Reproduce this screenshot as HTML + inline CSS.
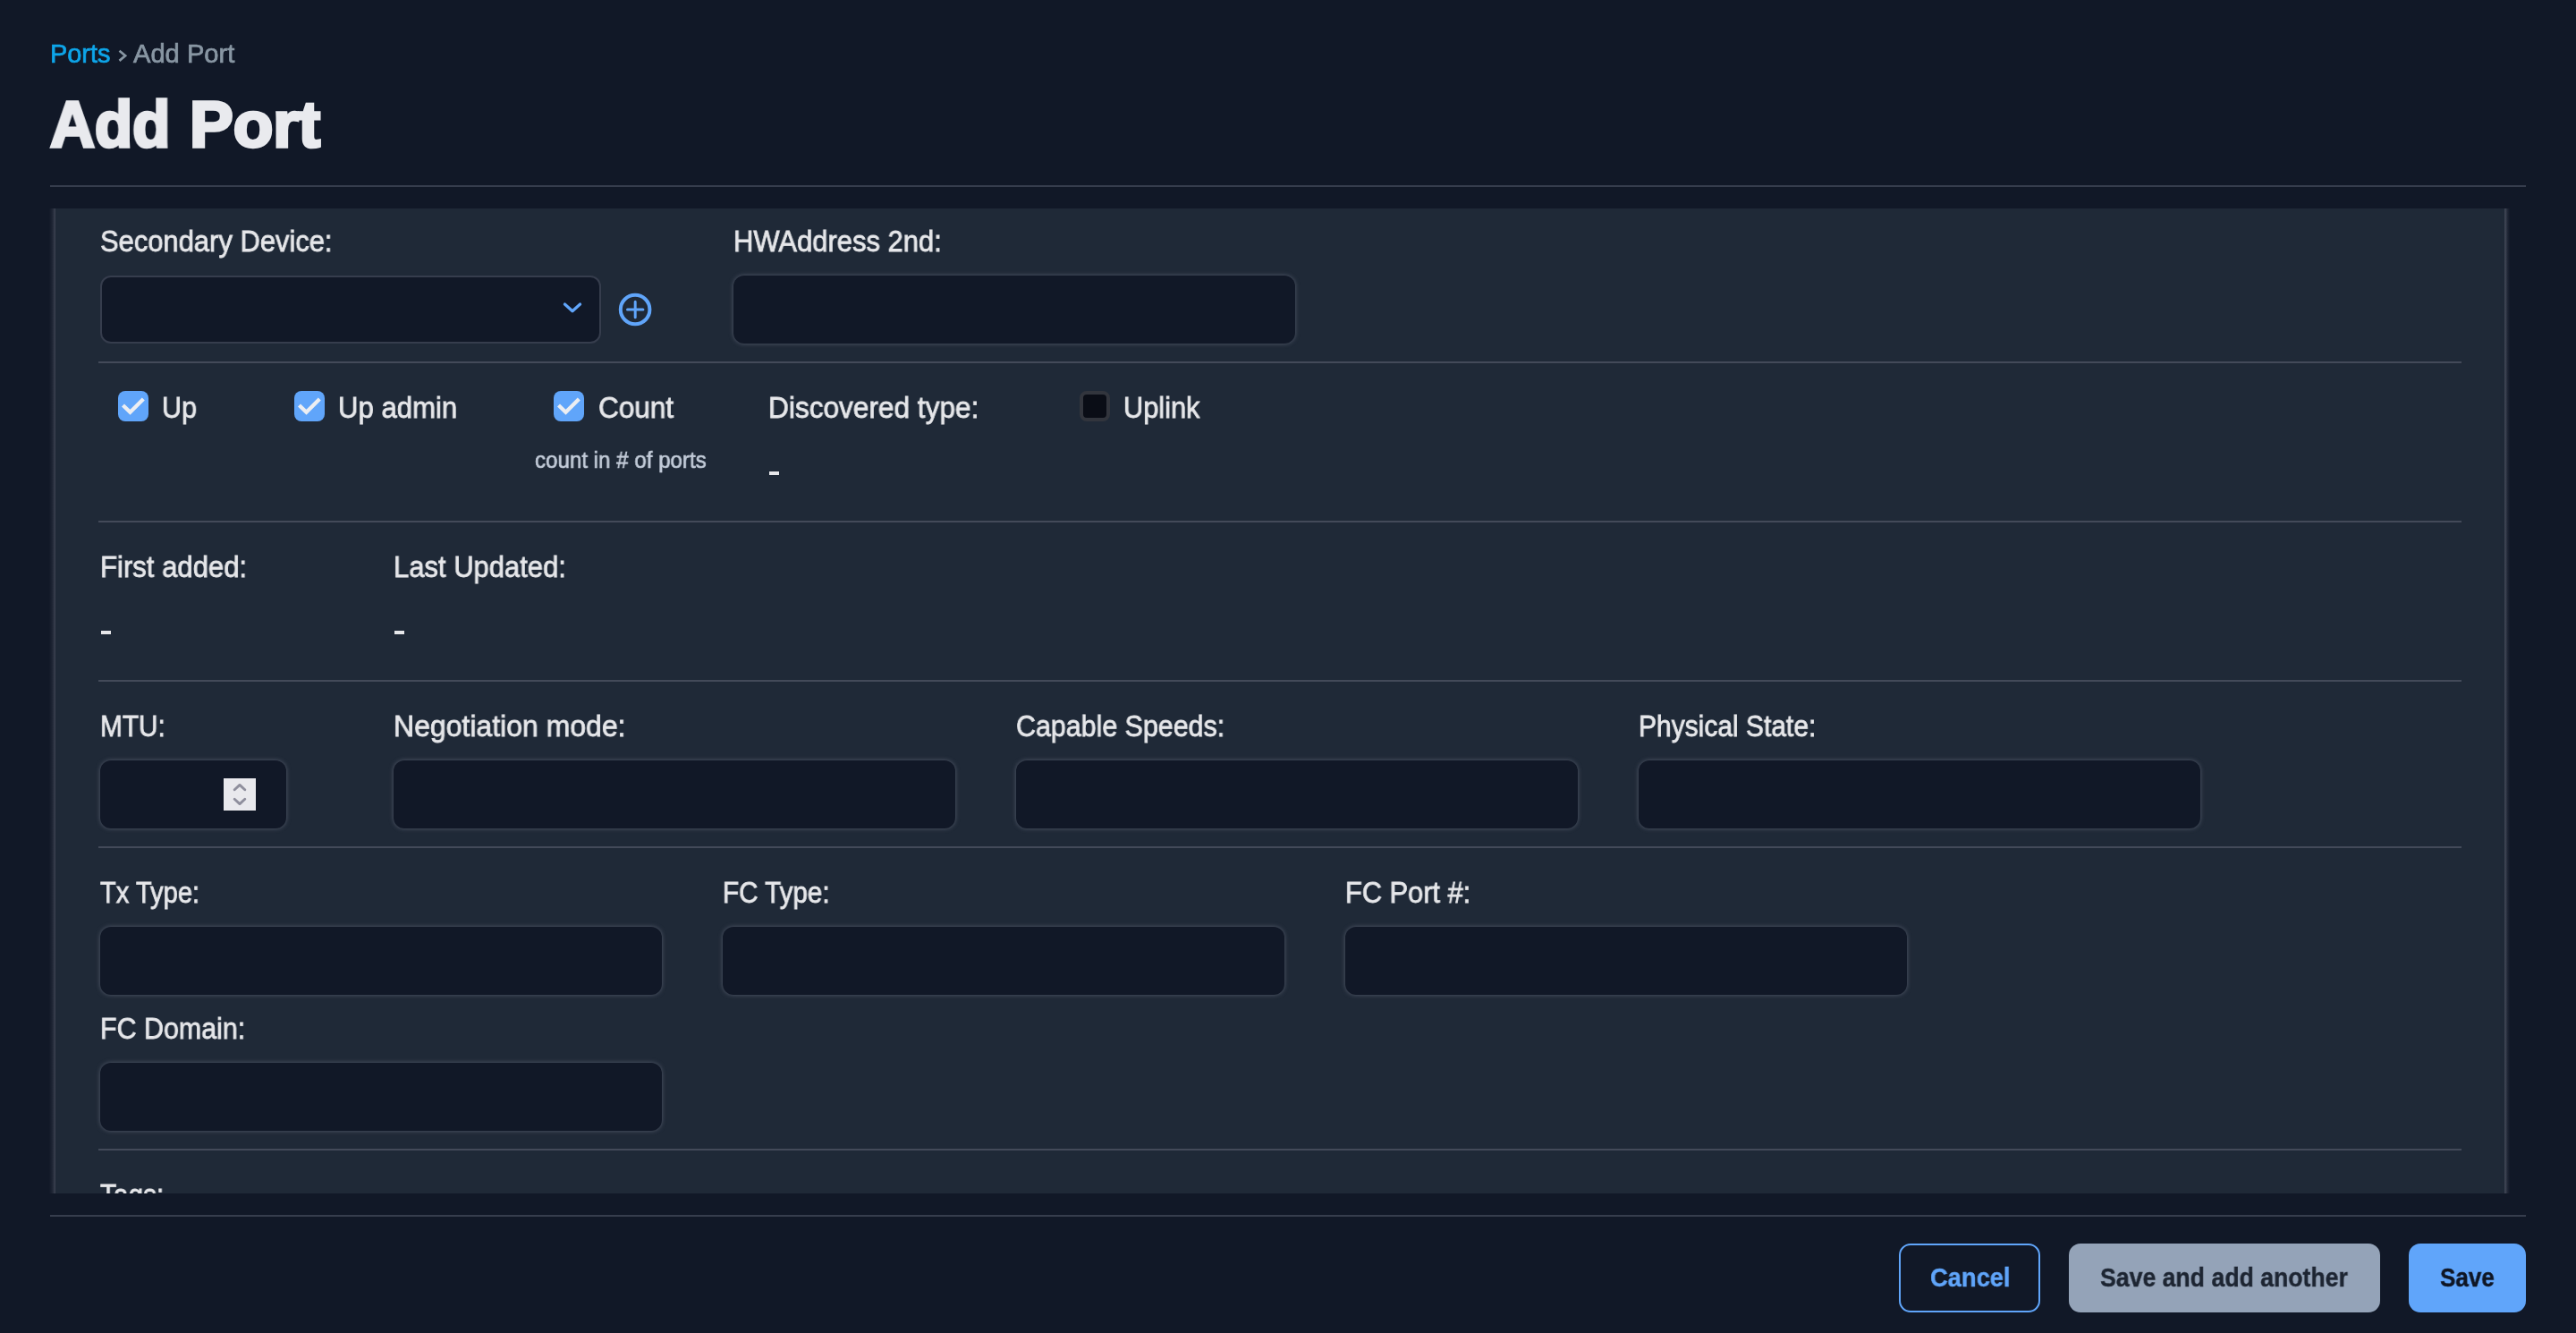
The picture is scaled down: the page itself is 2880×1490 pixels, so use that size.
<!DOCTYPE html>
<html lang="en">
<head>
<meta charset="utf-8">
<title>Add Port</title>
<style>
  html, body { margin: 0; padding: 0; }
  /* same page if rendered as 1440x745 CSS px @2x instead of 2880x1490 @1x */
  @media (max-width: 2000px) { html { zoom: 0.5; } }
  body {
    width: 2880px; height: 1490px; overflow: hidden; position: relative;
    background: #111827;
    font-family: "Liberation Sans", sans-serif;
  }
  .a { position: absolute; }
  .t { position: absolute; white-space: nowrap; line-height: 1; transform-origin: 0 0; will-change: transform; }
  .hr { position: absolute; height: 2px; background: #363d4d; }
  .panel { position: absolute; left: 62px; top: 233px; width: 2738px; height: 1101px; background: #1f2937; }
  .glowL { position: absolute; left: 55px; top: 233px; width: 7px; height: 1101px;
           background: linear-gradient(to right, rgba(62,68,83,0) 0%, rgba(62,68,83,.35) 55%, rgba(62,68,83,1) 100%); }
  .glowR { position: absolute; left: 2800px; top: 233px; width: 6px; height: 1101px;
           background: linear-gradient(to right, rgba(62,68,83,1) 0%, rgba(62,68,83,.95) 22%, rgba(62,68,83,.4) 52%, rgba(62,68,83,0) 100%); }
  .in { position: absolute; background: #111827; border-radius: 12px; height: 76px; width: 628px;
        box-shadow: 0 0 5px 0 #565d6d; }
  .sel { position: absolute; box-sizing: border-box; background: #111827; border: 2px solid #363d4d; border-radius: 12px; }
  .div { position: absolute; left: 110px; width: 2642px; height: 2px; background: #434a59; }
  .cb { position: absolute; width: 34px; height: 34px; border-radius: 8px; background: #60a5fa; }
  .cbo { position: absolute; box-sizing: border-box; width: 33.4px; height: 33.4px; border-radius: 8px; background: #0a0d16; border: 4px solid #32353d; }
  .dash { position: absolute; width: 11.2px; height: 3.9px; background: #e6e7ea; }
  .btn { position: absolute; box-sizing: border-box; top: 1390px; height: 77px; border-radius: 13px; }
  .cover { position: absolute; left: 0; top: 1334px; width: 2880px; height: 24px; background: #111827; }
</style>
</head>
<body>

<!-- header rule -->
<div class="hr" style="left:56px;top:207px;width:2768px;"></div>

<!-- breadcrumb chevron -->
<svg class="a" style="left:128px;top:52px" width="20" height="22" viewBox="0 0 20 22">
  <polyline points="5.5,4.7 12.1,10.3 5.5,15.9" fill="none" stroke="#8896a3" stroke-width="2.7" stroke-linecap="butt" stroke-linejoin="miter"/>
</svg>

<!-- form panel -->
<div class="glowL"></div>
<div class="glowR"></div>
<div class="panel"></div>

<!-- row 1 -->
<div class="sel" style="left:112px;top:308px;width:560px;height:76px;"></div>
<svg class="a" style="left:624px;top:330.6px" width="32" height="28" viewBox="0 0 32 28">
  <polyline points="7.4,9 16,16.8 24.6,9" fill="none" stroke="#60a5fa" stroke-width="3.2" stroke-linecap="round" stroke-linejoin="round"/>
</svg>
<svg class="a" style="left:688px;top:324px" width="44" height="44" viewBox="0 0 44 44">
  <circle cx="22.1" cy="22" r="16.3" fill="none" stroke="#60a5fa" stroke-width="4"/>
  <path d="M13.5 22 H30.9 M22.2 13.3 V30.7" fill="none" stroke="#60a5fa" stroke-width="3" stroke-linecap="round"/>
</svg>
<div class="in" style="left:820px;top:308px;"></div>

<div class="div" style="top:404px;"></div>

<!-- row 2 : checkboxes -->
<div class="cb" style="left:132px;top:437px;"></div>
<div class="cb" style="left:329px;top:437px;"></div>
<div class="cb" style="left:619px;top:437px;"></div>
<svg class="a" style="left:132px;top:437px" width="34" height="34" viewBox="0 0 34 34"><polyline points="5.5,16 13.5,23.7 28.3,9" fill="none" stroke="#eceef2" stroke-width="4.3" stroke-linecap="butt" stroke-linejoin="miter"/></svg>
<svg class="a" style="left:329px;top:437px" width="34" height="34" viewBox="0 0 34 34"><polyline points="5.5,16 13.5,23.7 28.3,9" fill="none" stroke="#eceef2" stroke-width="4.3" stroke-linecap="butt" stroke-linejoin="miter"/></svg>
<svg class="a" style="left:619px;top:437px" width="34" height="34" viewBox="0 0 34 34"><polyline points="5.5,16 13.5,23.7 28.3,9" fill="none" stroke="#eceef2" stroke-width="4.3" stroke-linecap="butt" stroke-linejoin="miter"/></svg>
<div class="cbo" style="left:1207.3px;top:437.3px;"></div>
<div class="dash" style="left:860px;top:526.8px;"></div>

<div class="div" style="top:582px;"></div>

<!-- row 3 -->
<div class="dash" style="left:113.2px;top:704.7px;"></div>
<div class="dash" style="left:441.3px;top:704.7px;"></div>

<div class="div" style="top:760px;"></div>

<!-- row 4 -->
<div class="in" style="left:112px;top:850px;width:208px;"></div>
<div class="a" style="left:250px;top:870px;width:36px;height:36px;background:#e9e9ed;"></div>
<svg class="a" style="left:250px;top:870px" width="36" height="36" viewBox="0 0 36 36">
  <polyline points="12.2,12.8 18,7.4 23.8,12.8" fill="none" stroke="#8f8f9d" stroke-width="2.9" stroke-linecap="round" stroke-linejoin="round"/>
  <polyline points="12.2,23.2 18,28.6 23.8,23.2" fill="none" stroke="#8f8f9d" stroke-width="2.9" stroke-linecap="round" stroke-linejoin="round"/>
</svg>
<div class="in" style="left:440px;top:850px;"></div>
<div class="in" style="left:1136px;top:850px;"></div>
<div class="in" style="left:1832px;top:850px;"></div>

<div class="div" style="top:946px;"></div>

<!-- row 5 -->
<div class="in" style="left:112px;top:1036px;"></div>
<div class="in" style="left:808px;top:1036px;"></div>
<div class="in" style="left:1504px;top:1036px;"></div>
<div class="in" style="left:112px;top:1188px;"></div>

<div class="div" style="top:1284px;"></div>

<!-- footer -->
<div class="hr" style="left:56px;top:1358px;width:2768px;"></div>
<div class="btn" style="left:2123px;width:158px;border:2px solid #60a5fa;"></div>
<div class="btn" style="left:2313px;width:348px;background:#94a3b8;"></div>
<div class="btn" style="left:2693px;width:131px;background:#60a5fa;"></div>


<!-- text -->
<div class="t" style="left:55.94px;top:45.65px;font-size:28.7px;font-weight:400;color:#0ea5e9;transform:scaleX(1.0075);-webkit-text-stroke:0.7px #0ea5e9;">Ports</div>
<div class="t" style="left:149.26px;top:45.65px;font-size:28.7px;font-weight:400;color:#8896a3;transform:scaleX(1.0146);-webkit-text-stroke:0.7px #8896a3;">Add Port</div>
<div class="t" style="left:56.31px;top:102.00px;font-size:73.0px;font-weight:700;color:#e9eaee;transform:scaleX(0.9463);-webkit-text-stroke:3.5px #e9eaee;">Add</div>
<div class="t" style="left:211.75px;top:102.00px;font-size:73.0px;font-weight:700;color:#e9eaee;transform:scaleX(0.9987);-webkit-text-stroke:3.5px #e9eaee;">Port</div>
<div class="t" style="left:111.65px;top:252.75px;font-size:33.5px;font-weight:400;color:#e6e7ea;transform:scaleX(0.9230);-webkit-text-stroke:0.8px #e6e7ea;">Secondary Device:</div>
<div class="t" style="left:819.82px;top:252.75px;font-size:33.5px;font-weight:400;color:#e6e7ea;transform:scaleX(0.9237);-webkit-text-stroke:0.8px #e6e7ea;">HWAddress 2nd:</div>
<div class="t" style="left:181.44px;top:438.75px;font-size:33.5px;font-weight:400;color:#e6e7ea;transform:scaleX(0.9099);-webkit-text-stroke:0.8px #e6e7ea;">Up</div>
<div class="t" style="left:378.21px;top:438.75px;font-size:33.5px;font-weight:400;color:#e6e7ea;transform:scaleX(0.9286);-webkit-text-stroke:0.8px #e6e7ea;">Up admin</div>
<div class="t" style="left:669.24px;top:438.75px;font-size:33.5px;font-weight:400;color:#e6e7ea;transform:scaleX(0.9412);-webkit-text-stroke:0.8px #e6e7ea;">Count</div>
<div class="t" style="left:598.47px;top:501.00px;font-size:26.0px;font-weight:400;color:#c3ccd9;transform:scaleX(0.9276);-webkit-text-stroke:0.65px #c3ccd9;">count in # of ports</div>
<div class="t" style="left:858.99px;top:438.75px;font-size:33.5px;font-weight:400;color:#e6e7ea;transform:scaleX(0.9431);-webkit-text-stroke:0.8px #e6e7ea;">Discovered type:</div>
<div class="t" style="left:1256.13px;top:438.75px;font-size:33.5px;font-weight:400;color:#e6e7ea;transform:scaleX(0.9182);-webkit-text-stroke:0.8px #e6e7ea;">Uplink</div>
<div class="t" style="left:111.92px;top:616.75px;font-size:33.5px;font-weight:400;color:#e6e7ea;transform:scaleX(0.9280);-webkit-text-stroke:0.8px #e6e7ea;">First added:</div>
<div class="t" style="left:439.82px;top:616.75px;font-size:33.5px;font-weight:400;color:#e6e7ea;transform:scaleX(0.9245);-webkit-text-stroke:0.8px #e6e7ea;">Last Updated:</div>
<div class="t" style="left:111.77px;top:794.75px;font-size:33.5px;font-weight:400;color:#e6e7ea;transform:scaleX(0.8907);-webkit-text-stroke:0.8px #e6e7ea;">MTU:</div>
<div class="t" style="left:439.77px;top:794.75px;font-size:33.5px;font-weight:400;color:#e6e7ea;transform:scaleX(0.9546);-webkit-text-stroke:0.8px #e6e7ea;">Negotiation mode:</div>
<div class="t" style="left:1136.06px;top:794.75px;font-size:33.5px;font-weight:400;color:#e6e7ea;transform:scaleX(0.9072);-webkit-text-stroke:0.8px #e6e7ea;">Capable Speeds:</div>
<div class="t" style="left:1831.97px;top:794.75px;font-size:33.5px;font-weight:400;color:#e6e7ea;transform:scaleX(0.8947);-webkit-text-stroke:0.8px #e6e7ea;">Physical State:</div>
<div class="t" style="left:112.35px;top:980.75px;font-size:33.5px;font-weight:400;color:#e6e7ea;transform:scaleX(0.8689);-webkit-text-stroke:0.8px #e6e7ea;">Tx Type:</div>
<div class="t" style="left:808.29px;top:980.75px;font-size:33.5px;font-weight:400;color:#e6e7ea;transform:scaleX(0.8838);-webkit-text-stroke:0.8px #e6e7ea;">FC Type:</div>
<div class="t" style="left:1504.23px;top:980.75px;font-size:33.5px;font-weight:400;color:#e6e7ea;transform:scaleX(0.9186);-webkit-text-stroke:0.8px #e6e7ea;">FC Port #:</div>
<div class="t" style="left:111.95px;top:1132.75px;font-size:33.5px;font-weight:400;color:#e6e7ea;transform:scaleX(0.9075);-webkit-text-stroke:0.8px #e6e7ea;">FC Domain:</div>
<div class="t" style="left:112.36px;top:1318.75px;font-size:33.5px;font-weight:400;color:#e6e7ea;transform:scaleX(0.8897);-webkit-text-stroke:0.8px #e6e7ea;">Tags:</div>
<div class="t" style="left:2157.56px;top:1412.70px;font-size:29.6px;font-weight:700;color:#60a5fa;transform:scaleX(0.9231);-webkit-text-stroke:0.4px #60a5fa;">Cancel</div>
<div class="t" style="left:2348.48px;top:1412.70px;font-size:29.6px;font-weight:700;color:#1d2532;transform:scaleX(0.9004);-webkit-text-stroke:0.4px #1d2532;">Save and add another</div>
<div class="t" style="left:2728.48px;top:1412.70px;font-size:29.6px;font-weight:700;color:#0f1624;transform:scaleX(0.8775);-webkit-text-stroke:0.4px #0f1624;">Save</div>

<!-- clip the bottom of the scroll panel -->
<div class="cover"></div>

</body>
</html>
